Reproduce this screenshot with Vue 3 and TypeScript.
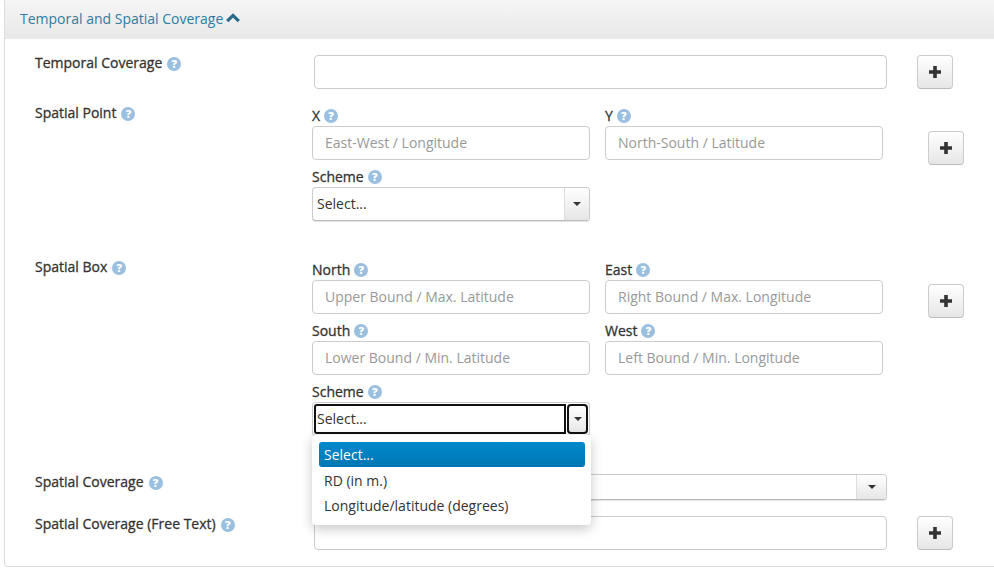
<script setup lang="ts">
const options = ['RD (in m.)', 'Longitude/latitude (degrees)']
</script>

<template>
  <div class="panel">
    <div class="head">
      <a class="title">Temporal and Spatial Coverage</a>
      <svg class="chev" viewBox="0 0 14 10" width="14" height="10"><path d="M1.2 8.2 L7 2.4 L12.8 8.2" fill="none" stroke="#2a6a8c" stroke-width="3.2"/></svg>
    </div>
    <div class="body">
      <section class="row r1">
        <div class="lab"><b>Temporal Coverage</b><i class="q">?</i></div>
        <div class="input wide"></div>
        <button class="plus">
          <svg viewBox="0 0 14 14" width="14" height="14"><path d="M7 1v12M1 7h12" stroke="#333" stroke-width="3.6"/></svg>
        </button>
      </section>

      <section class="row r2">
        <div class="lab"><b>Spatial Point</b><i class="q">?</i></div>
        <div class="fields">
          <div class="pair">
            <div class="field">
              <div class="flab"><b>X</b><i class="q">?</i></div>
              <div class="input ph">East-West / Longitude</div>
            </div>
            <div class="field">
              <div class="flab"><b>Y</b><i class="q">?</i></div>
              <div class="input ph">North-South / Latitude</div>
            </div>
          </div>
          <div class="field">
            <div class="flab"><b>Scheme</b><i class="q">?</i></div>
            <div class="select"><span class="val">Select...</span><span class="arrow"><em></em></span></div>
          </div>
        </div>
        <button class="plus offset-a">
          <svg viewBox="0 0 14 14" width="14" height="14"><path d="M7 1v12M1 7h12" stroke="#333" stroke-width="3.6"/></svg>
        </button>
      </section>

      <section class="row r3">
        <div class="lab"><b>Spatial Box</b><i class="q">?</i></div>
        <div class="fields">
          <div class="pair">
            <div class="field">
              <div class="flab"><b>North</b><i class="q">?</i></div>
              <div class="input ph">Upper Bound / Max. Latitude</div>
            </div>
            <div class="field">
              <div class="flab"><b>East</b><i class="q">?</i></div>
              <div class="input ph">Right Bound / Max. Longitude</div>
            </div>
          </div>
          <div class="pair">
            <div class="field">
              <div class="flab"><b>South</b><i class="q">?</i></div>
              <div class="input ph">Lower Bound / Min. Latitude</div>
            </div>
            <div class="field">
              <div class="flab"><b>West</b><i class="q">?</i></div>
              <div class="input ph">Left Bound / Min. Longitude</div>
            </div>
          </div>
          <div class="field open">
            <div class="flab"><b>Scheme</b><i class="q">?</i></div>
            <div class="select focus"><span class="val">Select...</span><span class="arrow"><em></em></span></div>
            <ul class="menu">
              <li class="sel">Select...</li>
              <li v-for="o in options" :key="o">{{ o }}</li>
            </ul>
          </div>
        </div>
        <button class="plus offset-b">
          <svg viewBox="0 0 14 14" width="14" height="14"><path d="M7 1v12M1 7h12" stroke="#333" stroke-width="3.6"/></svg>
        </button>
      </section>

      <section class="row r4">
        <div class="lab"><b>Spatial Coverage</b><i class="q">?</i></div>
        <div class="select wide short"><span class="val"></span><span class="arrow"><em></em></span></div>
      </section>

      <section class="row r5">
        <div class="lab"><b>Spatial Coverage (Free Text)</b><i class="q">?</i></div>
        <div class="input wide"></div>
        <button class="plus">
          <svg viewBox="0 0 14 14" width="14" height="14"><path d="M7 1v12M1 7h12" stroke="#333" stroke-width="3.6"/></svg>
        </button>
      </section>
    </div>
  </div>
</template>

<style>
html, body { margin: 0; background: #fff; overflow: hidden; }
</style>

<style scoped>
.panel {
  box-sizing: border-box;
  margin-left: 4px;
  width: 1000px;
  height: 567px;
  border: 1px solid #ddd;
  border-top: 0;
  border-radius: 0 0 4px 4px;
  font: 14px/20px "Open Sans", sans-serif;
  color: #333;
}
.head {
  height: 39px;
  box-sizing: border-box;
  padding: 9px 15px 0;
  background: linear-gradient(#f5f5f5, #e8e8e8);
  display: flex;
  align-items: flex-start;
}
.title { color: #2f7ba3; }
.chev { margin: 4px 0 0 3px; }
.body { position: relative; }
.row { display: flex; align-items: flex-start; box-sizing: border-box; }
.lab { width: 278px; padding-left: 30px; box-sizing: border-box; flex: none; white-space: nowrap; }
b { font-weight: 400; color: #333; -webkit-text-stroke: 0.3px #333; }
.q {
  display: inline-block;
  width: 14px;
  height: 14px;
  margin-left: 5px;
  border-radius: 50%;
  background: #9abfdf;
  color: #fff;
  font: 800 11px/14px "Open Sans", sans-serif;
  text-align: center;
  vertical-align: 0;
}
.flab .q { margin-left: 4px; vertical-align: 1px; }
.input {
  box-sizing: border-box;
  height: 34px;
  background: #fff;
  border: 1px solid #ccc;
  border-radius: 4px;
  padding: 6px 12px;
}
.ph { color: #999; }
.wide { width: 573px; margin-left: 31px; flex: none; }
.plus {
  box-sizing: border-box;
  width: 36px;
  height: 34px;
  padding: 0;
  margin-left: 30px;
  border: 1px solid #ccc;
  border-bottom-color: #bbb;
  border-radius: 4px;
  background: linear-gradient(#fff, #e6e6e6);
  display: flex;
  align-items: center;
  justify-content: center;
  flex: none;
}
.r1 { padding-top: 16px; height: 51px; }
.r1 .lab { margin-top: -2px; }
.r2 { height: 154px; }
.r2 .lab { padding-top: 13px; }
.fields { margin-left: 29px; width: 571px; flex: none; padding-top: 15px; }
.pair { display: flex; gap: 15px; margin-bottom: 6px; }
.field { width: 278px; flex: none; position: relative; }
.flab { box-sizing: border-box; height: 21px; padding-top: 1px; line-height: 20px; white-space: nowrap; }
.select {
  box-sizing: border-box;
  height: 34px;
  border: 1px solid #ccc;
  border-bottom-color: #bbb;
  border-radius: 4px;
  display: flex;
  background: #fff;
  box-shadow: 0 1px 1px rgba(0,0,0,.12);
}
.val { flex: 1; padding: 6px 0 0 4px; }
.arrow {
  width: 24px;
  flex: none;
  border-left: 1px solid #ddd;
  background: linear-gradient(#fff, #e6e6e6);
  border-radius: 0 3px 3px 0;
  display: flex;
  align-items: center;
  justify-content: center;
}
.arrow em { width: 0; height: 0; border: 4px solid transparent; border-top: 4px solid #333; border-bottom: 0; }
.offset-a { margin-left: 45px; margin-top: 41px; }
.offset-b { margin-left: 45px; margin-top: 40px; }
.r3 { height: 230px; }
.r3 .lab { padding-top: 13px; }
.focus { position: relative; }
.focus .val { outline: 2px solid #111; outline-offset: -2px; border-radius: 3px 0 0 3px; margin: 1px 0 1px 1px; padding: 5px 0 0 3px; }
.focus .arrow { outline: 2px solid #111; outline-offset: -2px; border-radius: 4px; border-left: 0; margin: 1px 1px 1px 1px; width: 21px; }
.menu {
  position: absolute;
  z-index: 5;
  left: 0;
  top: 54px;
  width: 279px;
  height: 90px;
  box-sizing: border-box;
  margin: 0;
  padding: 7px 6px 7px 7px;
  list-style: none;
  background: #fff;
  border-radius: 4px;
  box-shadow: 0 4px 12px rgba(0,0,0,.22);
}
.menu li { height: 25px; padding-left: 5px; line-height: 25px; }
.menu li.sel { color: #fff; background: linear-gradient(#0088cc, #0077b3); border-radius: 3px; margin-bottom: 1px; }
.r4 { height: 42px; }
.r4 .lab { margin-top: -2px; }
.short { height: 26px; }
.short .arrow { width: 29px; }
.r5 .lab { margin-top: -2px; }
</style>
